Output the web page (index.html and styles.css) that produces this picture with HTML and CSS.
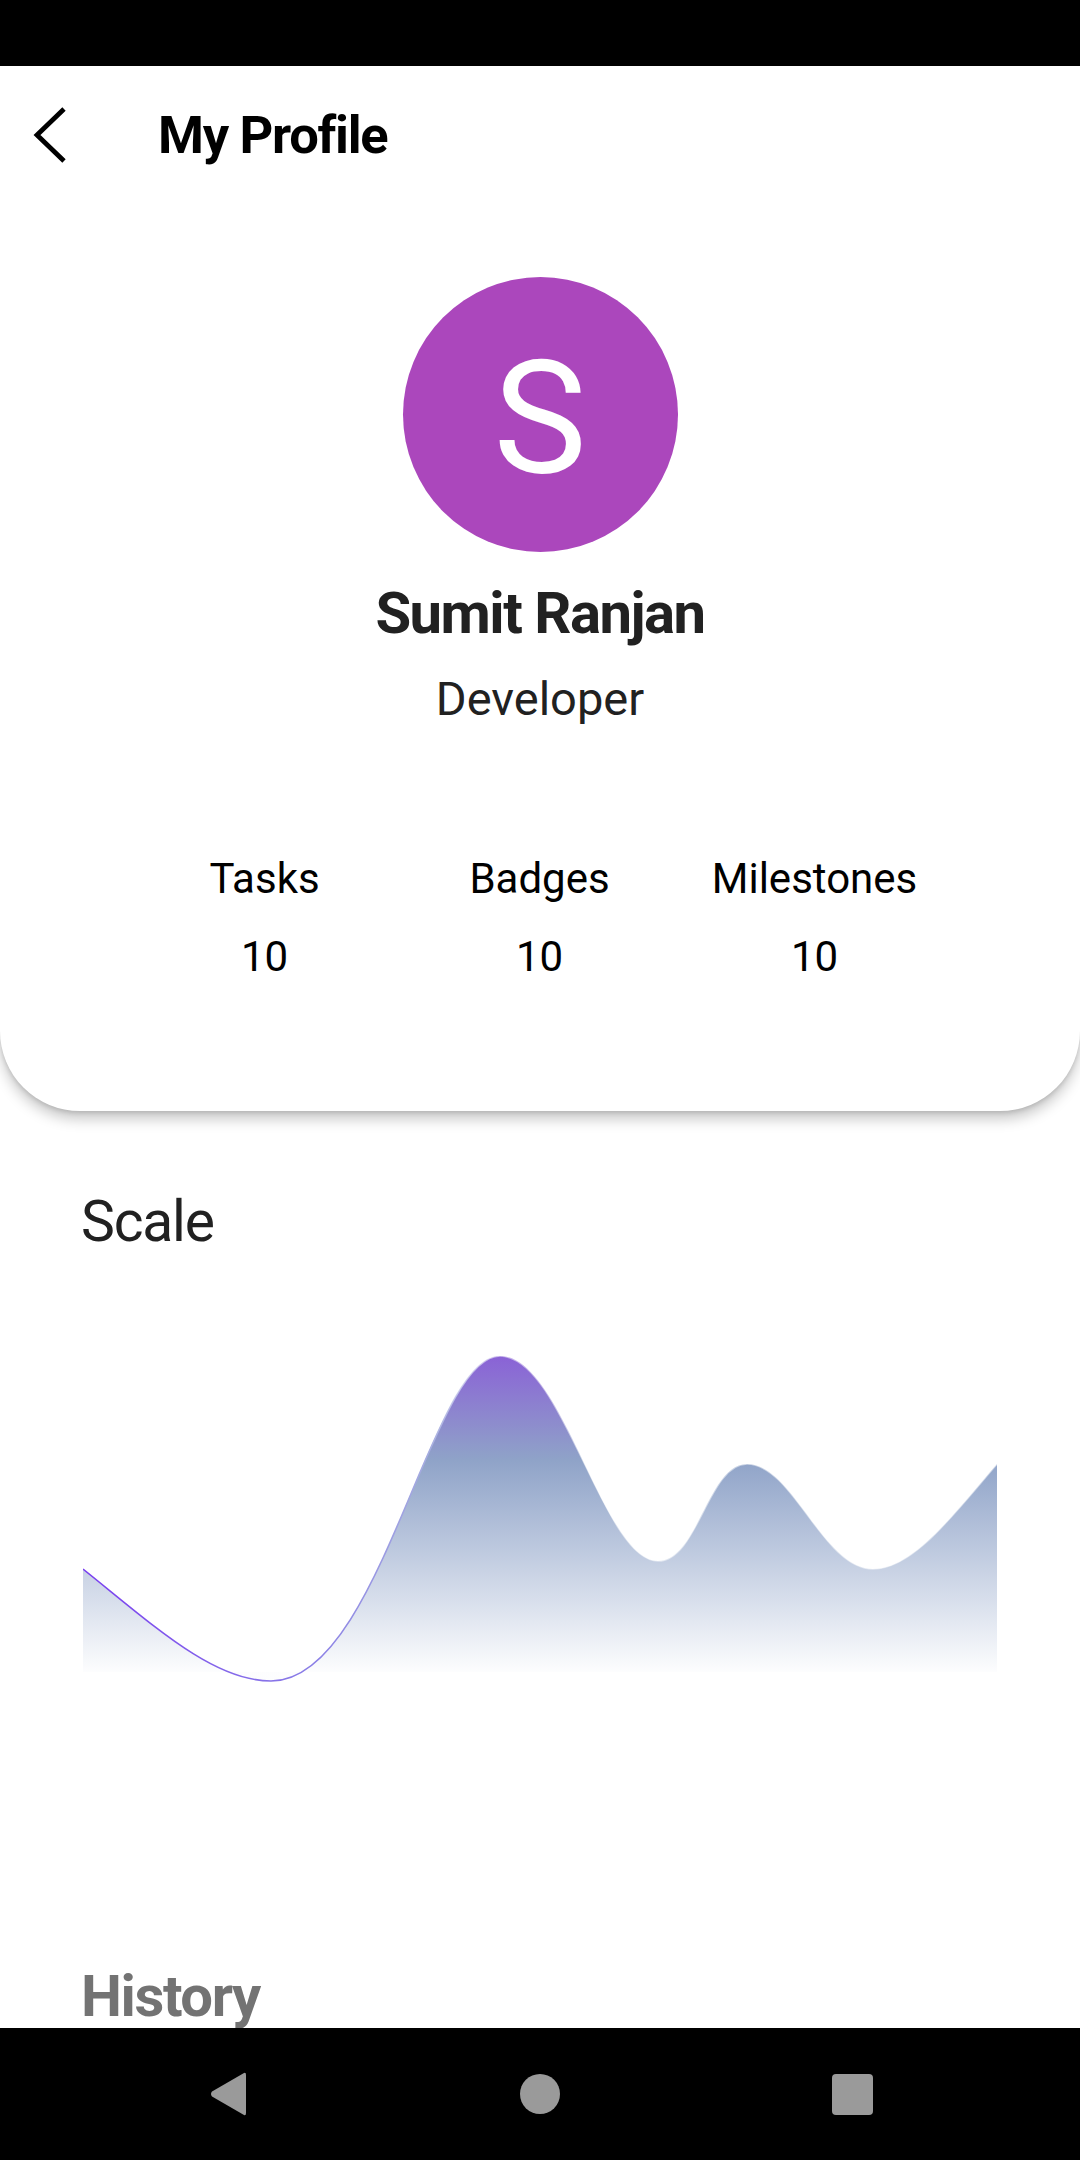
FILE: index.html
```html
<!DOCTYPE html>
<html lang="en">
<head>
<meta charset="utf-8">
<title>My Profile</title>
<link rel="stylesheet" href="styles.css">
</head>
<body>
<div class="screen">
  <div class="status-bar"></div>
  <main class="main">
    <section class="card">
      <header class="app-bar">
        <svg class="back-icon" width="34" height="56" viewBox="0 0 34 56" aria-hidden="true">
          <polyline points="31,2 4,28 31,54" fill="none" stroke="#000" stroke-width="4.8"/>
        </svg>
        <h1 class="app-title">My Profile</h1>
      </header>
      <div class="profile">
        <div class="avatar"><span class="avatar-letter">S</span></div>
        <div class="name">Sumit Ranjan</div>
        <div class="role">Developer</div>
      </div>
      <div class="stats">
        <div class="stat"><div class="stat-label">Tasks</div><div class="stat-value">10</div></div>
        <div class="stat"><div class="stat-label">Badges</div><div class="stat-value">10</div></div>
        <div class="stat"><div class="stat-label">Milestones</div><div class="stat-value">10</div></div>
      </div>
    </section>

    <section class="scale">
      <h2 class="section-title">Scale</h2>
      <div class="chart">
        <svg width="914" height="350" viewBox="0 0 914 350" aria-hidden="true">
          <defs>
            <linearGradient id="fillGrad" gradientUnits="userSpaceOnUse" x1="0" y1="16" x2="0" y2="332">
              <stop offset="0" stop-color="#8a62d6"/>
              <stop offset="0.33" stop-color="#8fa3c8"/>
              <stop offset="1" stop-color="#8fa3c8" stop-opacity="0.02"/>
            </linearGradient>
            <linearGradient id="lineGrad" gradientUnits="userSpaceOnUse" x1="0" y1="0" x2="914" y2="0">
              <stop offset="0" stop-color="#7a3ff0"/>
              <stop offset="0.25" stop-color="#8a7ee6"/>
              <stop offset="0.38" stop-color="#a6ade0"/>
              <stop offset="0.46" stop-color="#ffffff" stop-opacity="0.5"/>
              <stop offset="1" stop-color="#ffffff" stop-opacity="0.5"/>
            </linearGradient>
          </defs>
          <path d="M0,229 C70,285 130,341 188,341 C298,341 347,16 417,16 C480,16 520,221 575,221 C615,221 625,124 664,124 C710,124 740,229 790,229 C830,229 870,175 914,124 L914,332 L0,332 Z" fill="url(#fillGrad)"/>
          <path d="M0,229 C70,285 130,341 188,341 C298,341 347,16 417,16 C480,16 520,221 575,221 C615,221 625,124 664,124 C710,124 740,229 790,229 C830,229 870,175 914,124" fill="none" stroke="url(#lineGrad)" stroke-width="1.6"/>
        </svg>
      </div>
    </section>

    <section class="history">
      <h2 class="history-title">History</h2>
    </section>
  </main>
  <nav class="nav-bar">
    <div class="nav-cell">
      <svg width="38" height="46" viewBox="0 0 38 46" aria-hidden="true">
        <path d="M35,2 Q37,1 37,4 L37,42 Q37,45 35,44 L3,25.5 Q1,23 3,20.5 Z" fill="#9a9a9a"/>
      </svg>
    </div>
    <div class="nav-cell"><span class="nav-home"></span></div>
    <div class="nav-cell"><span class="nav-recent"></span></div>
  </nav>
</div>
</body>
</html>
```

FILE: styles.css
```css
* {
  box-sizing: border-box;
}

html, body {
  margin: 0;
  padding: 0;
  background: #ffffff;
}

body {
  font-family: Roboto, "Noto Sans", "Liberation Sans", sans-serif;
  color: #212121;
}

.screen {
  width: 1080px;
  height: 2160px;
  display: flex;
  flex-direction: column;
  overflow: hidden;
}

.status-bar {
  height: 66px;
  flex: none;
  background: #000;
}

.main {
  flex: 1;
  min-height: 0;
  overflow: hidden;
  background: #fff;
}

/* Profile card */
.card {
  position: relative;
  z-index: 1;
  background: #fff;
  border-radius: 0 0 80px 80px;
  box-shadow: 0 8px 14px rgba(0, 0, 0, 0.22), 0 2px 4px rgba(0, 0, 0, 0.12);
  padding-bottom: 130px;
}

.app-bar {
  height: 138px;
  display: flex;
  align-items: center;
  padding-left: 33px;
}

.back-icon {
  display: block;
  flex: none;
}

.app-title {
  margin: 0 0 0 91px;
  font-size: 52.5px;
  font-weight: 700;
  letter-spacing: -1.3px;
  color: #000;
  line-height: normal;
}

.profile {
  display: flex;
  flex-direction: column;
  align-items: center;
  padding-top: 73px;
}

.avatar {
  width: 275px;
  height: 275px;
  border-radius: 50%;
  background: #ab47bc;
  display: flex;
  align-items: center;
  justify-content: center;
  padding-top: 7px;
}

.avatar-letter {
  color: #fff;
  font-size: 157px;
  line-height: 1;
  font-weight: 400;
}

.name {
  margin-top: 27px;
  font-size: 58px;
  font-weight: 700;
  letter-spacing: -1.5px;
  color: #212121;
  line-height: normal;
}

.role {
  margin-top: 24px;
  font-size: 47px;
  font-weight: 400;
  color: #212121;
  line-height: normal;
}

.stats {
  display: grid;
  grid-template-columns: repeat(3, 275px);
  justify-content: center;
  margin-top: 128px;
  padding-right: 1px;
}

.stat {
  display: flex;
  flex-direction: column;
  align-items: center;
  color: #000;
}

.stat-label {
  font-size: 42px;
  line-height: normal;
}

.stat-value {
  margin-top: 29px;
  font-size: 42px;
  line-height: normal;
}

/* Scale section */
.scale {
  padding-left: 81px;
}

.section-title {
  margin: 77px 0 0;
  font-size: 57px;
  font-weight: 400;
  letter-spacing: -1.2px;
  color: #212121;
  line-height: normal;
}

.chart {
  margin-top: 85px;
  padding-left: 2px;
}

.chart svg {
  display: block;
}

/* History */
.history {
  padding-left: 81px;
}

.history-title {
  margin: 272px 0 0;
  font-size: 58px;
  font-weight: 700;
  letter-spacing: -1.4px;
  color: #737373;
  line-height: normal;
}

/* Navigation bar */
.nav-bar {
  height: 132px;
  flex: none;
  background: #000;
  display: grid;
  grid-template-columns: repeat(3, 312px);
  justify-content: center;
  align-items: center;
}

.nav-cell {
  display: flex;
  justify-content: center;
  align-items: center;
}

.nav-cell svg {
  display: block;
}

.nav-home {
  width: 40px;
  height: 40px;
  border-radius: 50%;
  background: #9a9a9a;
}

.nav-recent {
  width: 41px;
  height: 41px;
  border-radius: 4px;
  background: #9a9a9a;
}
```
